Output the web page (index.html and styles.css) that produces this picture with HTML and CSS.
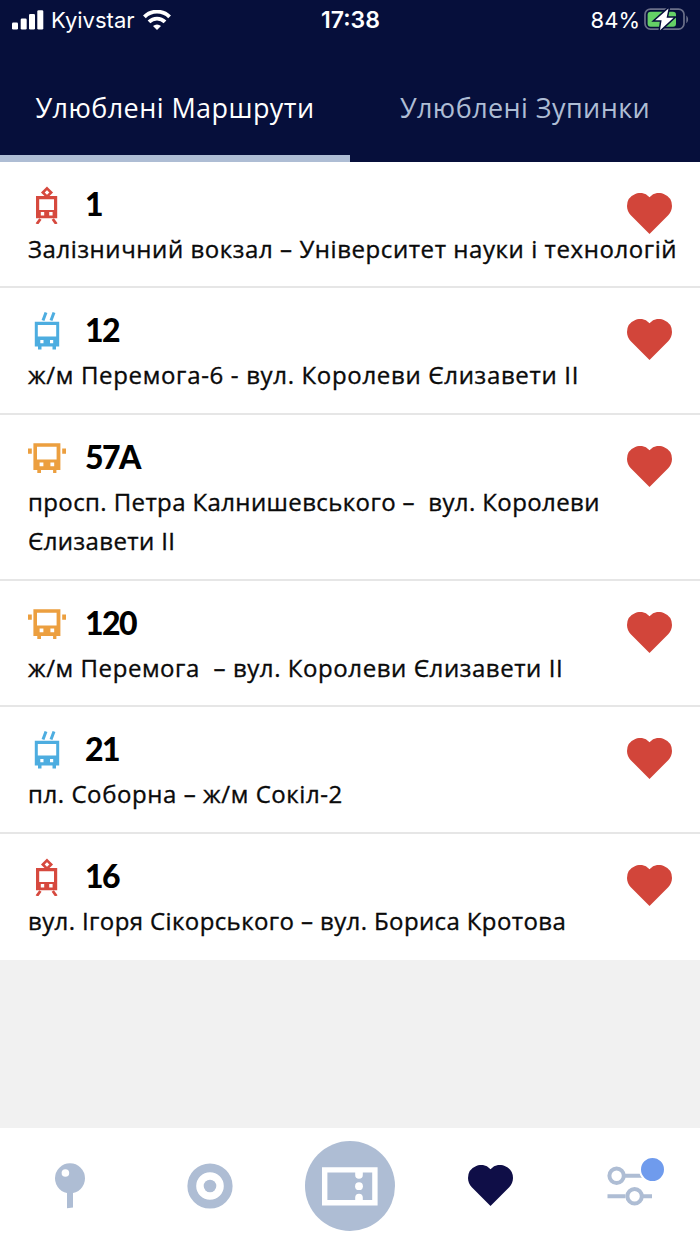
FILE: index.html
```html
<!DOCTYPE html>
<html lang="uk">
<head>
    <meta charset="UTF-8">
    <meta name="viewport" content="width=device-width, initial-scale=1.0">
    <title>Улюблені Маршрути</title>
    <link rel="stylesheet" href="styles.css">
</head>
<body>

    <svg class="sprite" width="0" height="0">
        <symbol id="heart" viewBox="0 0 45 41">
            <path d="M22.5 41L3.8 22.2C1.4 19.6 0 16.5 0 13A13 13 0 0 1 22.5 4.2A13 13 0 0 1 45 13c0 3.5-1.4 6.6-3.8 9.2z"/>
        </symbol>
        <symbol id="tram" viewBox="0 0 38 38">
            <path d="M19 2.3l4.2 4.2-4.2 4.2-4.2-4.2z" fill="none" stroke="currentColor" stroke-width="2.6"/>
            <path fill-rule="evenodd" d="M8 10H29.2V32.2H8zM11.2 13.2v10.8h14.8V13.2zM12.8 26v3.4h3.4V26zM21.2 26v3.4h3.4V26z"/>
            <path d="M12.4 33L8.8 38M24.8 33l3.6 5" stroke="currentColor" stroke-width="2.8"/>
        </symbol>
        <symbol id="trolleybus" viewBox="0 0 38 38">
            <path d="M15 8.5l3-8M23 8.5l3-8" stroke="currentColor" stroke-width="3"/>
            <path fill-rule="evenodd" d="M6.8 9.8H31.2V34.6H28v3h-3.5v-3h-11v3H10v-3H6.8zM9.8 13v11.4h18.4V13zM12.3 28v3.2h3.2V28zM22 28v3.2h3.2V28z"/>
        </symbol>
        <symbol id="bus" viewBox="0 0 38 38">
            <path fill-rule="evenodd" d="M5.4 4.2H32.4V31H28.4V34h-3.3v-3H13V34H9.3v-3H5.4zM9 7.8v12.8h19.6V7.8zM11.6 23.6v3.6h3.8v-3.6zM22.4 23.6v3.6h3.8v-3.6z"/>
            <path d="M0 9.4h3.8v5.4H0zM34.2 9.4H38v5.4h-3.8z"/>
        </symbol>
    </svg>

    <div class="app">
        <header class="header">
            <div class="status">
                <div class="status-left">
                    <svg width="32" height="20" viewBox="0 0 32 20" fill="#fff">
                        <rect x="0" y="12.5" width="6" height="7" rx="1.3"/>
                        <rect x="8.7" y="8.5" width="6" height="11" rx="1.3"/>
                        <rect x="17" y="4" width="6" height="15.5" rx="1.3"/>
                        <rect x="25.3" y="0.3" width="6" height="19.2" rx="1.3"/>
                    </svg>
                    <span class="carrier">Kyivstar</span>
                    <svg width="28" height="20" viewBox="0 0 28 20" fill="none" stroke="#fff" stroke-width="3.9">
                        <path d="M1.4 6.8a18 18 0 0 1 25.2 0"/>
                        <path d="M6 11.9a11.5 11.5 0 0 1 16 0"/>
                        <path d="M14 20l-4-4a6 6 0 0 1 8 0z" fill="#fff" stroke="none"/>
                    </svg>
                </div>
                <span class="time">17:38</span>
                <div class="status-right">
                    <span>84%</span>
                    <svg width="45" height="24" viewBox="0 0 45 24">
                        <rect x="1" y="1.1" width="39" height="20" rx="5.5" fill="none" stroke="#6b7089" stroke-width="1.7"/>
                        <path d="M42.3 7.6v7.6c2.4-1.6 2.4-6 0-7.6z" fill="#6b7089"/>
                        <rect x="3.6" y="3.7" width="28.4" height="15" rx="3" fill="#65d166"/>
                        <path d="M24.5 0.4L11.2 12.3h6.4L16 22.3 29.6 9.7h-7z" fill="#fff" stroke="#060f3b" stroke-width="3" paint-order="stroke"/>
                    </svg>
                </div>
            </div>
            <nav class="tabs">
                <a class="tab active">Улюблені Маршрути</a>
                <a class="tab">Улюблені Зупинки</a>
            </nav>
        </header>

        <main class="routes">
            <div class="route">
                <div class="route-head">
                    <svg class="icon tram"><use href="#tram"/></svg>
                    <span class="number">1</span>
                    <svg class="like"><use href="#heart"/></svg>
                </div>
                <p class="path">Залізничний вокзал – Університет науки і технологій</p>
            </div>
            <div class="route">
                <div class="route-head">
                    <svg class="icon trolleybus"><use href="#trolleybus"/></svg>
                    <span class="number">12</span>
                    <svg class="like"><use href="#heart"/></svg>
                </div>
                <p class="path wide">ж/м Перемога-6 - вул. Королеви Єлизавети ІІ</p>
            </div>
            <div class="route two-lines">
                <div class="route-head">
                    <svg class="icon bus"><use href="#bus"/></svg>
                    <span class="number">57А</span>
                    <svg class="like"><use href="#heart"/></svg>
                </div>
                <p class="path narrow">просп. Петра Калнишевського –&nbsp; вул. Королеви<br>Єлизавети ІІ</p>
            </div>
            <div class="route">
                <div class="route-head">
                    <svg class="icon bus"><use href="#bus"/></svg>
                    <span class="number">120</span>
                    <svg class="like"><use href="#heart"/></svg>
                </div>
                <p class="path">ж/м Перемога&nbsp; – вул. Королеви Єлизавети ІІ</p>
            </div>
            <div class="route">
                <div class="route-head">
                    <svg class="icon trolleybus"><use href="#trolleybus"/></svg>
                    <span class="number">21</span>
                    <svg class="like"><use href="#heart"/></svg>
                </div>
                <p class="path">пл. Соборна – ж/м Сокіл-2</p>
            </div>
            <div class="route">
                <div class="route-head">
                    <svg class="icon tram"><use href="#tram"/></svg>
                    <span class="number">16</span>
                    <svg class="like"><use href="#heart"/></svg>
                </div>
                <p class="path narrow">вул. Ігоря Сікорського – вул. Бориса Кротова</p>
            </div>
        </main>

        <nav class="bottom-nav">
            <a class="nav-item">
                <svg width="46" height="46" viewBox="0 0 46 46" fill="#aebdd4">
                    <circle cx="23" cy="15.3" r="15"/>
                    <path d="M20 28h6v16.4l-6 .9z"/>
                    <circle cx="18.4" cy="10" r="3.8" fill="#fff"/>
                </svg>
            </a>
            <a class="nav-item">
                <svg width="46" height="46" viewBox="0 0 46 46">
                    <circle cx="23" cy="23" r="18.2" fill="none" stroke="#aebdd4" stroke-width="8.8"/>
                    <circle cx="23" cy="23" r="6.3" fill="#aebdd4"/>
                </svg>
            </a>
            <a class="nav-item">
                <svg width="90" height="90" viewBox="0 0 90 90">
                    <circle cx="45" cy="45" r="45" fill="#aebdd4"/>
                    <path d="M19.7 28.9h50.2v32.9H19.7z" fill="none" stroke="#fff" stroke-width="5.4"/>
                    <path d="M50.2 31v2.9a3.8 3.8 0 0 0 7.6 0V31zM50.2 59.5v-2.9a3.8 3.8 0 0 1 7.6 0v2.9z" fill="#fff"/>
                    <circle cx="54" cy="45.2" r="3.9" fill="#fff"/>
                </svg>
            </a>
            <a class="nav-item">
                <svg class="nav-heart"><use href="#heart"/></svg>
            </a>
            <a class="nav-item">
                <span class="settings">
                    <svg width="46" height="46" viewBox="0 0 46 46" fill="none" stroke="#aebdd4" stroke-width="4">
                        <circle cx="9.6" cy="12.8" r="7.2"/>
                        <path d="M17 12.8h28M0.5 33.3h18M36 33.3h9"/>
                        <circle cx="27.6" cy="33.3" r="7.2"/>
                    </svg>
                    <span class="badge"></span>
                </span>
            </a>
        </nav>
    </div>

</body>
</html>
```
FILE: styles.css
```css
body {
    margin: 0;
    font-family: "Open Sans", "Noto Sans", sans-serif;
    background-color: #f1f1f1;
    color: #0a0a0a;
}
.sprite {
    position: absolute;
}
.app {
    display: flex;
    flex-direction: column;
    height: 1244px;
    overflow: hidden;
}
.header {
    display: flex;
    flex-direction: column;
    height: 161.6px;
    background-color: #060f3b;
    color: #fff;
}
.status {
    display: grid;
    grid-template-columns: 1fr auto 1fr;
    align-items: center;
    height: 39px;
    padding: 0 11px 0 12px;
    font-family: Inter, sans-serif;
    font-size: 22px;
}
.status-left, .status-right {
    display: flex;
    align-items: center;
}
.status-left {
    gap: 7px;
}
.carrier {
    margin-right: 1px;
}
.status-right {
    justify-content: flex-end;
    gap: 4px;
}
.time {
    font-size: 23px;
    font-weight: 600;
}
.tabs {
    display: flex;
    flex: 1;
}
.tab {
    flex: 1;
    padding-top: 49px;
    text-align: center;
    font-size: 27px;
    line-height: 40px;
    letter-spacing: 0.42px;
    color: #aebdd4;
    border-bottom: 7px solid transparent;
}
.tab.active {
    color: #fff;
    border-bottom-color: #aebdd4;
}
.routes {
    flex: 1;
}
.route {
    box-sizing: border-box;
    min-height: 126.5px;
    padding: 21px 24px 18.5px 28px;
    background-color: #fff;
    border-bottom: 2px solid #e6e6e6;
}
.route.two-lines {
    padding-bottom: 19px;
}
.route:last-child {
    border-bottom-color: #fff;
}
.route-head {
    display: flex;
    align-items: center;
    height: 46px;
}
.icon {
    width: 38px;
    height: 38px;
    margin-bottom: 2px;
    fill: currentColor;
}
.tram {
    color: #d6493e;
}
.trolleybus {
    color: #4dade0;
}
.bus {
    color: #ec9f3f;
}
.number {
    margin: 0 0 4px 19px;
    font-family: Lato, sans-serif;
    font-size: 32px;
    font-weight: 900;
    line-height: 42px;
    letter-spacing: -1.5px;
    color: #000;
}
.like {
    width: 45px;
    height: 41px;
    margin: 15px 4px 0 auto;
    fill: #d2453a;
}
.path {
    margin: 0;
    font-size: 24px;
    line-height: 39px;
    letter-spacing: 0.57px;
    white-space: nowrap;
    -webkit-text-stroke: 0.35px #0a0a0a;
}
.path.wide {
    letter-spacing: 0.67px;
}
.path.narrow {
    letter-spacing: 0.39px;
}
.bottom-nav {
    display: flex;
    height: 116px;
    background-color: #fff;
}
.nav-item {
    display: flex;
    flex: 1;
    align-items: center;
    justify-content: center;
}
.nav-heart {
    width: 45px;
    height: 41px;
    margin-bottom: 2px;
    fill: #0f0e47;
}
.settings {
    position: relative;
    height: 46px;
}
.badge {
    position: absolute;
    top: -7px;
    right: -13px;
    width: 23px;
    height: 23px;
    background-color: #6f9bed;
    border: 2px solid #fff;
    border-radius: 50%;
}
```
